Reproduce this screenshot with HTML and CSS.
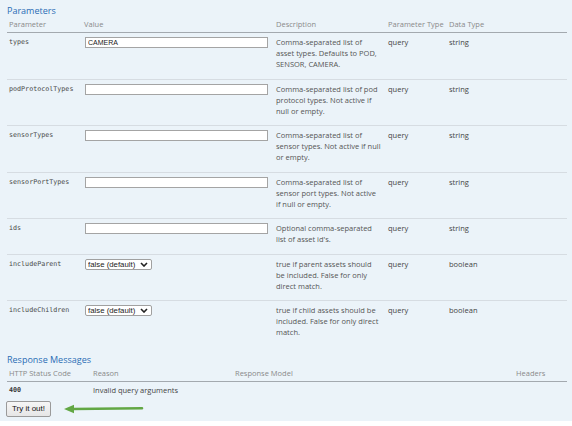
FILE: index.html
```html
<!DOCTYPE html>
<html lang="en">

<head>
    <meta charset="UTF-8">
    <meta name="viewport" content="width=device-width, initial-scale=1.0">
    <title>Assets</title>
    <link rel="stylesheet" href="styles.css">
</head>

<body>
    <div class="content">
        <h4 class="section-title">Parameters</h4>
        <table class="params">
            <thead>
                <tr>
                    <th class="col-name">Parameter</th>
                    <th class="col-value">Value</th>
                    <th class="col-desc">Description</th>
                    <th class="col-ptype">Parameter Type</th>
                    <th class="col-dtype">Data Type</th>
                </tr>
            </thead>
            <tbody>
                <tr>
                    <td class="code">types</td>
                    <td><input type="text" class="param-input" value="CAMERA"></td>
                    <td class="desc">Comma-separated list of<br>asset types. Defaults to POD,<br>SENSOR, CAMERA.</td>
                    <td>query</td>
                    <td>string</td>
                </tr>
                <tr>
                    <td class="code">podProtocolTypes</td>
                    <td><input type="text" class="param-input"></td>
                    <td class="desc">Comma-separated list of pod<br>protocol types. Not active if<br>null or empty.</td>
                    <td>query</td>
                    <td>string</td>
                </tr>
                <tr>
                    <td class="code">sensorTypes</td>
                    <td><input type="text" class="param-input"></td>
                    <td class="desc">Comma-separated list of<br>sensor types. Not active if null<br>or empty.</td>
                    <td>query</td>
                    <td>string</td>
                </tr>
                <tr>
                    <td class="code">sensorPortTypes</td>
                    <td><input type="text" class="param-input"></td>
                    <td class="desc">Comma-separated list of<br>sensor port types. Not active<br>if null or empty.</td>
                    <td>query</td>
                    <td>string</td>
                </tr>
                <tr>
                    <td class="code">ids</td>
                    <td><input type="text" class="param-input"></td>
                    <td class="desc">Optional comma-separated<br>list of asset id's.</td>
                    <td>query</td>
                    <td>string</td>
                </tr>
                <tr>
                    <td class="code">includeParent</td>
                    <td>
                        <div class="select-wrap">
                            <select class="param-select">
                                <option>false (default)</option>
                                <option>true</option>
                            </select>
                            <svg class="chevron" width="8" height="5" viewBox="0 0 8 5">
                                <path d="M1 1 L4 4 L7 1" fill="none" stroke="#222" stroke-width="1.6" />
                            </svg>
                        </div>
                    </td>
                    <td class="desc">true if parent assets should<br>be included. False for only<br>direct match.</td>
                    <td>query</td>
                    <td>boolean</td>
                </tr>
                <tr>
                    <td class="code">includeChildren</td>
                    <td>
                        <div class="select-wrap">
                            <select class="param-select">
                                <option>false (default)</option>
                                <option>true</option>
                            </select>
                            <svg class="chevron" width="8" height="5" viewBox="0 0 8 5">
                                <path d="M1 1 L4 4 L7 1" fill="none" stroke="#222" stroke-width="1.6" />
                            </svg>
                        </div>
                    </td>
                    <td class="desc">true if child assets should be<br>included. False for only direct<br>match.</td>
                    <td>query</td>
                    <td>boolean</td>
                </tr>
            </tbody>
        </table>

        <h4 class="section-title responses-title">Response Messages</h4>
        <table class="responses">
            <thead>
                <tr>
                    <th class="col-code">HTTP Status Code</th>
                    <th class="col-reason">Reason</th>
                    <th class="col-model">Response Model</th>
                    <th>Headers</th>
                </tr>
            </thead>
            <tbody>
                <tr>
                    <td class="code strong">400</td>
                    <td>Invalid query arguments</td>
                    <td></td>
                    <td></td>
                </tr>
            </tbody>
        </table>

        <div class="actions">
            <button class="try-btn">Try it out!</button>
            <svg class="arrow" width="80" height="10" viewBox="0 0 80 10">
                <path d="M9 5 L78 4.2" stroke="#62a744" stroke-width="2.6" stroke-linecap="round" />
                <path d="M0 5 L10 0.8 L10 9.2 Z" fill="#62a744" />
            </svg>
        </div>
    </div>
</body>

</html>
```

FILE: styles.css
```css
body {
    margin: 0;
    background-color: white;
    font-family: "Open Sans", "DejaVu Sans", sans-serif;
}

.content {
    background-color: #ebf3f9;
    height: 421px;
    padding: 4px 5px 0 7px;
    box-sizing: border-box;
}

.section-title {
    margin: 0;
    font-size: 9px;
    font-weight: normal;
    line-height: 14px;
    color: #2a6db5;
}

.responses-title {
    margin-top: 6px;
}

table {
    width: 560px;
    border-collapse: collapse;
    table-layout: fixed;
    font-size: 7.5px;
    color: #555;
}

th {
    text-align: left;
    font-weight: normal;
    color: #8a8a8a;
    line-height: 11px;
    padding: 1px 2px 2px 2px;
    border-bottom: 1px solid #a3a9af;
}

td {
    vertical-align: top;
    line-height: 11px;
    padding: 4px 2px 8.5px 2px;
    color: #444;
    white-space: nowrap;
}

.params tbody tr {
    border-bottom: 1px solid #d6dce2;
}

.params tbody tr:last-child {
    border-bottom: none;
}

.col-name {
    width: 71px;
}

.col-value {
    width: 188px;
}

.col-desc {
    width: 108px;
}

.col-ptype {
    width: 57px;
}

.code {
    font-family: "DejaVu Sans Mono", monospace;
    font-size: 6.7px;
    color: #4a4a4a;
}

.strong {
    font-weight: bold;
    color: #333;
}

.desc {
    color: #555;
}

.param-input {
    display: block;
    box-sizing: border-box;
    width: 183px;
    height: 11px;
    margin: 0 0 0 1px;
    padding: 0 2px;
    border: 1px solid #a4a4a4;
    background: white;
    font-family: "Liberation Sans", Arial, sans-serif;
    font-size: 7px;
    color: #222;
}

.select-wrap {
    position: relative;
    width: 67px;
    margin-left: 1px;
}

.param-select {
    display: block;
    appearance: none;
    box-sizing: border-box;
    width: 67px;
    height: 11px;
    margin: 0;
    padding: 0 0 0 2px;
    border: 1px solid #a0a0a0;
    border-radius: 2px;
    background: white;
    font-family: "Liberation Sans", Arial, sans-serif;
    font-size: 7.8px;
    line-height: 9px;
    color: #222;
}

.chevron {
    position: absolute;
    right: 4px;
    top: 3px;
}

.responses td {
    padding: 3px 2px 2px 2px;
}

.col-code {
    width: 80px;
}

.col-reason {
    width: 138px;
}

.col-model {
    width: 277px;
}

.actions {
    display: flex;
    align-items: center;
    gap: 13px;
    margin-top: 3px;
}

.try-btn {
    box-sizing: border-box;
    width: 45px;
    height: 16px;
    margin-left: -1px;
    padding: 0;
    border: 1px solid #9a9a9a;
    border-radius: 2px;
    background: linear-gradient(#f6f6f6, #e6e6e6);
    font-family: "Liberation Sans", Arial, sans-serif;
    font-size: 8px;
    color: #111;
}

.arrow {
    margin-top: 1px;
}
```
